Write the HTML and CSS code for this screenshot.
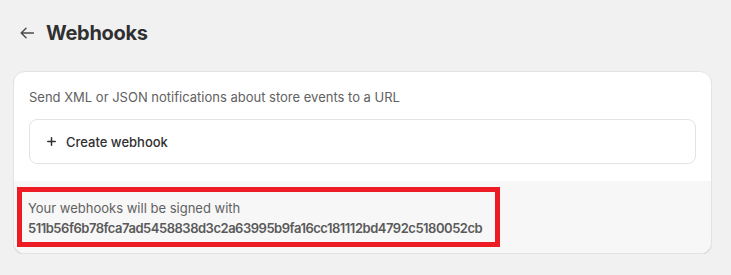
FILE: index.html
```html
<!DOCTYPE html>
<html>
<head>
<meta charset="utf-8">
<link rel="stylesheet" href="styles.css">
</head>
<body>
<div class="page">
  <header class="header">
    <svg class="back" width="14" height="12" viewBox="0 0 14 12" aria-hidden="true">
      <path d="M13.5 6H1.2M6 1.2L1.2 6L6 10.8" fill="none" stroke="#4a4a4a" stroke-width="1.4" stroke-linecap="round" stroke-linejoin="round"/>
    </svg>
    <h1 class="title">Webhooks</h1>
  </header>
  <section class="card">
    <div class="card-body">
      <p class="desc">Send XML or JSON notifications about store events to a URL</p>
      <button class="create">
        <svg class="plus" width="9" height="9" viewBox="0 0 9 9" aria-hidden="true">
          <path d="M4.5 0.8V8.2M0.8 4.5H8.2" stroke="#303030" stroke-width="1.5" stroke-linecap="round"/>
        </svg>
        <span>Create webhook</span>
      </button>
    </div>
    <div class="card-footer">
      <div class="highlight">
        <div class="sig-label">Your webhooks will be signed with</div>
        <div class="sig-key">511b56f6b78fca7ad5458838d3c2a63995b9fa16cc181112bd4792c5180052cb</div>
      </div>
    </div>
  </section>
</div>
</body>
</html>
```

FILE: styles.css
```css
* { box-sizing: border-box; }
html, body {
  margin: 0;
  padding: 0;
  background: #f1f1f1;
  font-family: Inter, "Noto Sans", sans-serif;
  -webkit-font-smoothing: antialiased;
}
.page {
  padding: 17px 19px 0 13px;
}
.header {
  display: flex;
  align-items: center;
  height: 32px;
  padding-left: 7px;
  gap: 12px;
}
.back { display: block; }
.title {
  margin: 0;
  font-size: 20px;
  font-weight: 700;
  color: #303030;
  letter-spacing: -0.3px;
  line-height: 32px;
}
.card {
  margin-top: 22px;
  background: #ffffff;
  border: 1px solid #e3e3e3;
  border-radius: 12px;
  box-shadow: 0 1px 0 rgba(0, 0, 0, 0.09);
  overflow: hidden;
}
.card-body {
  padding: 15px 15px 17px 15px;
}
.desc {
  margin: 0;
  font-size: 13px;
  line-height: 20px;
  color: #616161;
}
.create {
  margin-top: 12px;
  width: 100%;
  height: 45px;
  display: flex;
  align-items: center;
  gap: 10px;
  padding: 0 0 0 17px;
  background: #ffffff;
  border: 1px solid #e3e3e3;
  border-radius: 8px;
  font-family: inherit;
  font-size: 13px;
  font-weight: 500;
  color: #303030;
  text-align: left;
}
.plus { display: block; }
.card-footer {
  background: #f7f7f7;
  padding: 6px 0 6px 3px;
}
.highlight {
  width: 483px;
  border: 5px solid #ed1c24;
  padding: 6px 6px 4px 6px;
}
.sig-label {
  font-size: 13px;
  line-height: 20px;
  color: #616161;
}
.sig-key {
  font-size: 13px;
  line-height: 20px;
  font-weight: 600;
  color: #5a5a5a;
  white-space: nowrap;
  letter-spacing: -0.48px;
}
```
